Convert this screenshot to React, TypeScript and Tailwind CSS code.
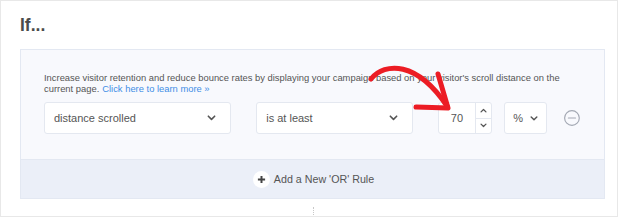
import React from 'react';

const font = { fontFamily: '"Liberation Sans", Arial, sans-serif' };

// --- Chevron ---
const Chevron: React.FC<{ up?: boolean; className?: string }> = ({ up, className = '' }) => (
  <svg viewBox="0 0 10 6" className={className} fill="none" stroke="currentColor" strokeWidth={1.8} strokeLinecap="round" strokeLinejoin="round">
    <path d={up ? 'M1.5 5L5 1.5L8.5 5' : 'M1.5 1L5 4.5L8.5 1'} />
  </svg>
);

// --- Select box ---
const SelectBox: React.FC<{ label: string; className?: string }> = ({ label, className = '' }) => (
  <div className={`h-8 flex items-center justify-between pl-[9px] pr-[14px] bg-white border border-[#e4e8f0] rounded-[3px] ${className}`}>
    <span className="text-[11px] text-[#555]">{label}</span>
    <Chevron className="w-[9px] h-[6px] text-[#555]" />
  </div>
);

export default function App() {
  return (
    <div style={font} className="w-[618px] h-[217px] bg-white border border-[#e8e8e8] relative overflow-hidden">
      <h2 className="ml-[19px] mt-[14px] text-[17.5px] leading-[20px] font-bold text-[#4b4b4b]">If...</h2>

      <div className="ml-[19px] mr-[12px] mt-[14px] border border-[#e3e8f2] bg-[#f8f9fd]">
        <div className="px-[23px] pt-[22px] pb-[25px]">
          <div className="text-[9.4px] leading-[11px] text-[#555]">
            <p className="whitespace-nowrap">
              Increase visitor retention and reduce bounce rates by displaying your campaign based on your visitor's scroll distance on the
            </p>
            <p className="flex gap-[3px]">
              <span>current page.</span>
              <span className="text-[#3f8ee6]">Click here to learn more »</span>
            </p>
          </div>

          <div className="mt-[8px] flex items-center">
            <SelectBox label="distance scrolled" className="w-[188px]" />
            <SelectBox label="is at least" className="w-[157px] ml-[25px]" />

            {/* number input with spinner */}
            <div className="ml-[25px] w-[55px] h-8 flex bg-white border border-[#e4e8f0] rounded-[3px]">
              <div className="flex-1 flex items-center justify-center text-[11px] text-[#555]">70</div>
              <div className="w-[16px] border-l border-[#e4e8f0] flex flex-col">
                <div className="flex-1 flex items-center justify-center border-b border-[#e4e8f0]">
                  <Chevron up className="w-[7px] h-[5px] text-[#555]" />
                </div>
                <div className="flex-1 flex items-center justify-center">
                  <Chevron className="w-[7px] h-[5px] text-[#555]" />
                </div>
              </div>
            </div>

            <div className="ml-[12px] w-[43px] h-8 flex items-center justify-center gap-[7px] bg-white border border-[#e4e8f0] rounded-[3px]">
              <span className="text-[11px] text-[#555]">%</span>
              <Chevron className="w-[8px] h-[5px] text-[#555]" />
            </div>

            <svg viewBox="0 0 20 20" className="ml-[16px] w-[18px] h-[18px] text-[#a3a8b3]" fill="none" stroke="currentColor" strokeWidth={1.3}>
              <circle cx="10" cy="10" r="8.2" />
              <path d="M6 10H14" strokeLinecap="round" />
            </svg>
          </div>
        </div>

        <div className="h-[39px] bg-[#ebeff8] border-t border-[#e3e8f2] flex items-center justify-center">
          <div className="flex items-center gap-[4px] translate-x-[1px]">
            <span className="w-[17px] h-[17px] rounded-full bg-white flex items-center justify-center">
              <svg viewBox="0 0 10 10" className="w-[9px] h-[9px] text-[#444]" fill="none" stroke="currentColor" strokeWidth={2.2}>
                <path d="M5 1V9M1 5H9" />
              </svg>
            </span>
            <span className="text-[10.7px] text-[#555]">Add a New 'OR' Rule</span>
          </div>
        </div>
      </div>

      {/* dotted connector */}
      <div className="mx-auto mt-[8px] w-0 h-[12px] border-l border-dotted border-[#c8c8c8] translate-x-[4px]" />

      {/* red annotation arrow */}
      <svg className="absolute left-0 top-0 pointer-events-none" width="618" height="217" fill="none" stroke="#ec1c24" strokeWidth={5} strokeLinecap="round" strokeLinejoin="round">
        <path d="M370 78C384 61 416 60 446 105" />
        <path d="M437 73L447 107L415 106" />
      </svg>
    </div>
  );
}
